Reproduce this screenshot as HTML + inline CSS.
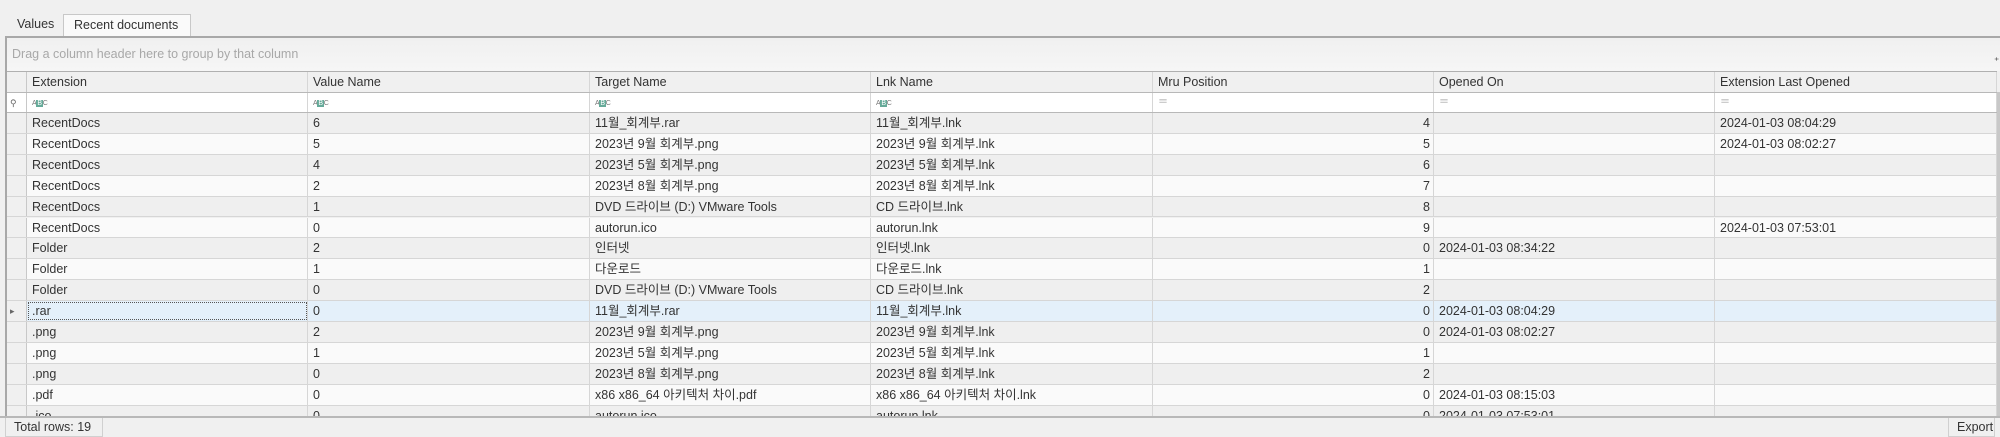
<!DOCTYPE html>
<html><head><meta charset="utf-8"><style>
*{box-sizing:border-box;margin:0;padding:0}
body{width:2000px;height:436px;background:#f0f0f0;font-family:"Liberation Sans","Noto Sans CJK KR",sans-serif;font-size:12.5px;color:#333;position:relative;overflow:hidden}
.tab{position:absolute;top:14px;height:23px;line-height:21px;padding:0 10px;font-size:12.5px}
.panel{position:absolute;left:5px;top:36px;width:1995px;height:381px;border-top:2px solid #a8a8a8;border-left:2px solid #a8a8a8}
.group{position:absolute;left:7px;top:38px;width:1993px;height:33px;background:linear-gradient(#f0f0f0,#f6f6f6);color:#a8a8a8;line-height:33px;padding-left:5px}
.grid{position:absolute;left:7px;top:71px;width:1990px;height:345px;overflow:hidden;border-top:1px solid #b0b0b0}
.row{position:absolute;left:0;width:1990px;display:flex;border-bottom:1px solid #d6d6d6}
.row>div{flex:none;border-right:1px solid #d6d6d6;padding:0 5px;white-space:nowrap;overflow:hidden;line-height:21px}
.row>div:nth-child(1){width:20px;padding:0 0 0 3px;background:#f0f0f0;border-right:1px solid #c8c8c8;font-size:9px;color:#666}
.row>div:nth-child(2){width:281px}
.row>div:nth-child(3){width:282px}
.row>div:nth-child(4){width:281px}
.row>div:nth-child(5){width:282px}
.row>div:nth-child(6){width:281px}
.row>div:nth-child(7){width:281px}
.row>div:nth-child(8){width:282px}
.h{background:#f0f0f0;height:21px;border-bottom:1px solid #b8b8b8}
.h>div{line-height:20px!important}
.f{background:#fff;height:20px;color:#999;font-size:10px;border-bottom:1px solid #b8b8b8}
.f>div{line-height:20px!important}
.g{background:#efefef}
.w{background:#fafafa}
.s{background:#e4f0fa}
.d{height:20.9px}
.row>div.r{text-align:right;padding-right:3px}
.abc{display:inline-block;font-size:7px;letter-spacing:-.3px;color:#777}
.abc b{background:#6a9;color:#fff;font-weight:normal;padding:0 1px}
.status{position:absolute;left:0;top:416px;width:2000px;height:20px;border-top:2px solid #b8b8b8;background:#f0f0f0}
.sb{position:absolute;top:0;height:19px;line-height:18px;border:1px solid #d0d0d0;border-top:none;padding:0 8px}
</style></head><body>
<div class="tab" style="left:7px">Values</div>
<div class="tab" style="left:63px;width:128px;background:#fafafa;border:1px solid #c8c8c8;border-bottom:none">Recent documents</div>
<div class="panel"></div>
<div class="group">Drag a column header here to group by that column</div>
<div style="position:absolute;left:1994px;top:56px;font-size:10px">⁺</div>
<div class="grid">
<div class="row h" style="top:0"><div></div><div>Extension</div><div>Value Name</div><div>Target Name</div><div>Lnk Name</div><div>Mru Position</div><div>Opened On</div><div>Extension Last Opened</div></div>
<div class="row f" style="top:21px"><div style="background:#fff">⚲</div><div><span class="abc">A<b>B</b>C</span></div><div><span class="abc">A<b>B</b>C</span></div><div><span class="abc">A<b>B</b>C</span></div><div><span class="abc">A<b>B</b>C</span></div><div>＝</div><div>＝</div><div>＝</div></div>
<div class="row d g" style="top:41px"><div></div><div>RecentDocs</div><div>6</div><div>11월_회계부.rar</div><div>11월_회계부.lnk</div><div class="r">4</div><div></div><div>2024-01-03 08:04:29</div></div>
<div class="row d w" style="top:61.9px"><div></div><div>RecentDocs</div><div>5</div><div>2023년 9월 회계부.png</div><div>2023년 9월 회계부.lnk</div><div class="r">5</div><div></div><div>2024-01-03 08:02:27</div></div>
<div class="row d g" style="top:82.8px"><div></div><div>RecentDocs</div><div>4</div><div>2023년 5월 회계부.png</div><div>2023년 5월 회계부.lnk</div><div class="r">6</div><div></div><div></div></div>
<div class="row d w" style="top:103.7px"><div></div><div>RecentDocs</div><div>2</div><div>2023년 8월 회계부.png</div><div>2023년 8월 회계부.lnk</div><div class="r">7</div><div></div><div></div></div>
<div class="row d g" style="top:124.6px"><div></div><div>RecentDocs</div><div>1</div><div>DVD 드라이브 (D:) VMware Tools</div><div>CD 드라이브.lnk</div><div class="r">8</div><div></div><div></div></div>
<div class="row d w" style="top:145.5px"><div></div><div>RecentDocs</div><div>0</div><div>autorun.ico</div><div>autorun.lnk</div><div class="r">9</div><div></div><div>2024-01-03 07:53:01</div></div>
<div class="row d g" style="top:166.4px"><div></div><div>Folder</div><div>2</div><div>인터넷</div><div>인터넷.lnk</div><div class="r">0</div><div>2024-01-03 08:34:22</div><div></div></div>
<div class="row d w" style="top:187.3px"><div></div><div>Folder</div><div>1</div><div>다운로드</div><div>다운로드.lnk</div><div class="r">1</div><div></div><div></div></div>
<div class="row d g" style="top:208.2px"><div></div><div>Folder</div><div>0</div><div>DVD 드라이브 (D:) VMware Tools</div><div>CD 드라이브.lnk</div><div class="r">2</div><div></div><div></div></div>
<div class="row d s" style="top:229.1px"><div>▸</div><div style="outline:1px dotted #555;outline-offset:-2px">.rar</div><div>0</div><div>11월_회계부.rar</div><div>11월_회계부.lnk</div><div class="r">0</div><div>2024-01-03 08:04:29</div><div></div></div>
<div class="row d g" style="top:250px"><div></div><div>.png</div><div>2</div><div>2023년 9월 회계부.png</div><div>2023년 9월 회계부.lnk</div><div class="r">0</div><div>2024-01-03 08:02:27</div><div></div></div>
<div class="row d w" style="top:270.9px"><div></div><div>.png</div><div>1</div><div>2023년 5월 회계부.png</div><div>2023년 5월 회계부.lnk</div><div class="r">1</div><div></div><div></div></div>
<div class="row d g" style="top:291.8px"><div></div><div>.png</div><div>0</div><div>2023년 8월 회계부.png</div><div>2023년 8월 회계부.lnk</div><div class="r">2</div><div></div><div></div></div>
<div class="row d w" style="top:312.7px"><div></div><div>.pdf</div><div>0</div><div>x86 x86_64 아키텍처 차이.pdf</div><div>x86 x86_64 아키텍처 차이.lnk</div><div class="r">0</div><div>2024-01-03 08:15:03</div><div></div></div>
<div class="row d g" style="top:333.6px"><div></div><div>.ico</div><div>0</div><div>autorun.ico</div><div>autorun.lnk</div><div class="r">0</div><div>2024-01-03 07:53:01</div><div></div></div>
</div>
<div style="position:absolute;left:1997px;top:92px;width:3px;height:324px;background:#c8c8c8"></div>
<div class="status">
<div class="sb" style="left:5px;width:98px">Total rows: 19</div>
<div class="sb" style="left:1948px;width:47px">Export</div>
</div>
</body></html>
